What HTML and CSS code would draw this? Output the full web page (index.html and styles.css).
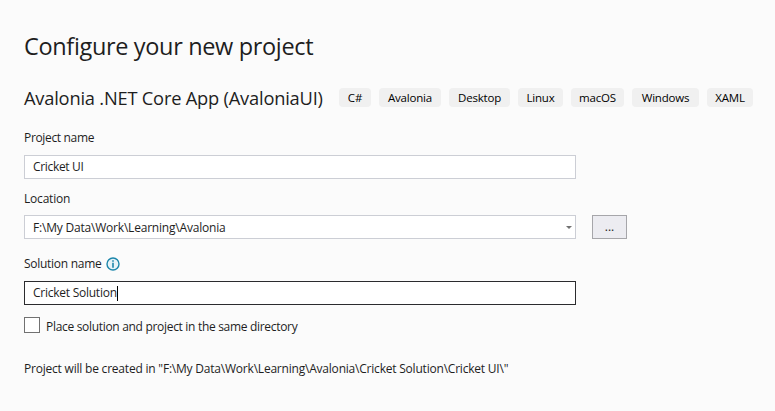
FILE: index.html
```html
<!DOCTYPE html>
<html lang="en">
<head>
<meta charset="utf-8">
<title>Configure your new project</title>
<link rel="stylesheet" href="styles.css">
</head>
<body>
<main class="page">
  <h1 class="title"><span>Configure your new project</span></h1>
  <div class="template">
    <h2 class="template-name"><span>Avalonia .NET Core App (AvaloniaUI)</span></h2>
    <ul class="tags">
      <li class="tag tag-cs">C#</li>
      <li class="tag tag-avalonia">Avalonia</li>
      <li class="tag tag-desktop">Desktop</li>
      <li class="tag tag-linux">Linux</li>
      <li class="tag tag-macos">macOS</li>
      <li class="tag tag-windows">Windows</li>
      <li class="tag tag-xaml">XAML</li>
    </ul>
  </div>
  <div class="label label-project"><span>Project name</span></div>
  <div class="field"><span class="name">Cricket UI</span></div>
  <div class="label label-location"><span>Location</span></div>
  <div class="location">
    <div class="field"><span class="path">F:\My Data\Work\Learning\Avalonia</span>
      <svg class="arrow" width="6" height="3" viewBox="0 0 6 3"><path d="M0 0h6L3 3z" fill="#717171"/></svg>
    </div>
    <button class="browse" type="button">...</button>
  </div>
  <div class="label label-solution"><span>Solution name</span>
    <svg class="info" width="14" height="14" viewBox="0 0 14 14"><circle cx="7" cy="7" r="6" fill="#e6f3f8" stroke="#1c86ab" stroke-width="1.4"/><path d="M6.2 3.2h1.6v1.6H6.2zM6.2 5.8h1.6v5H6.2z" fill="#1c86ab"/></svg>
  </div>
  <div class="field focused"><span class="solution">Cricket Solution</span><i class="caret"></i></div>
  <div class="check"><i class="box"></i><span>Place solution and project in the same directory</span></div>
  <p class="summary"><span>Project will be created in "F:\My Data\Work\Learning\Avalonia\Cricket Solution\Cricket UI\"</span></p>
</main>
</body>
</html>
```
FILE: styles.css
```css
* { box-sizing: border-box; }
body {
  margin: 0;
  background: #fbfbfb;
  color: #1e1e1e;
  font: 12px/16px "Open Sans", "Noto Sans", sans-serif;
  letter-spacing: -0.2px;
}
.page { width: 775px; height: 411px; padding: 29px 22px 0 24px; overflow: hidden; white-space: nowrap; }
.title { margin: 0; font-size: 23.5px; line-height: 34px; font-weight: 400; letter-spacing: -0.34px; }
.template { display: flex; height: 20px; margin-top: 25px; }
.template-name { width: 315px; margin: 0; font-size: 18.3px; line-height: 19px; font-weight: 400; letter-spacing: -0.21px; }
.tags { display: flex; gap: 8px; margin: 0; padding: 0; list-style: none; }
.tag { height: 19px; border-radius: 4px; background: #f0f0f0; font-size: 11.5px; line-height: 19px; text-align: center; color: #000; }
.tag-cs { width: 32px; }
.tag-avalonia { width: 62px; }
.tag-desktop { width: 61px; }
.tag-linux { width: 45px; }
.tag-macos { width: 53px; }
.tag-windows { width: 67px; }
.tag-xaml { width: 46px; }
.label { display: flex; align-items: center; height: 16px; }
.label-project { margin: 22px 0 9px; letter-spacing: -0.34px; }
.label-location { margin: 12px 0 8px; }
.label-solution { gap: 5px; margin: 17px 0 9px; letter-spacing: -0.28px; }
.field { display: flex; align-items: center; width: 552px; height: 24px; padding: 0 3px 0 8px; border: 1px solid #ccced5; background: #fff; }
.name { letter-spacing: -0.32px; }
.path { padding-top: 2px; }
.solution { letter-spacing: -0.25px; }
.focused { border-color: #2b2b2e; }
.location { display: flex; gap: 16px; }
.arrow { margin-left: auto; }
.browse { width: 35px; height: 24px; padding: 0; border: 1px solid #a6a6aa; background: #ececf1; color: #1e1e1e; font: inherit; letter-spacing: 0; }
.caret { width: 1px; height: 15px; background: #000; }
.check { display: flex; gap: 6px; height: 16px; margin-top: 12px; line-height: 20px; letter-spacing: -0.31px; }
.box { width: 16px; height: 16px; border: 1px solid #717171; background: #fff; }
.summary { margin: 28px 0 0; letter-spacing: -0.21px; }
```
